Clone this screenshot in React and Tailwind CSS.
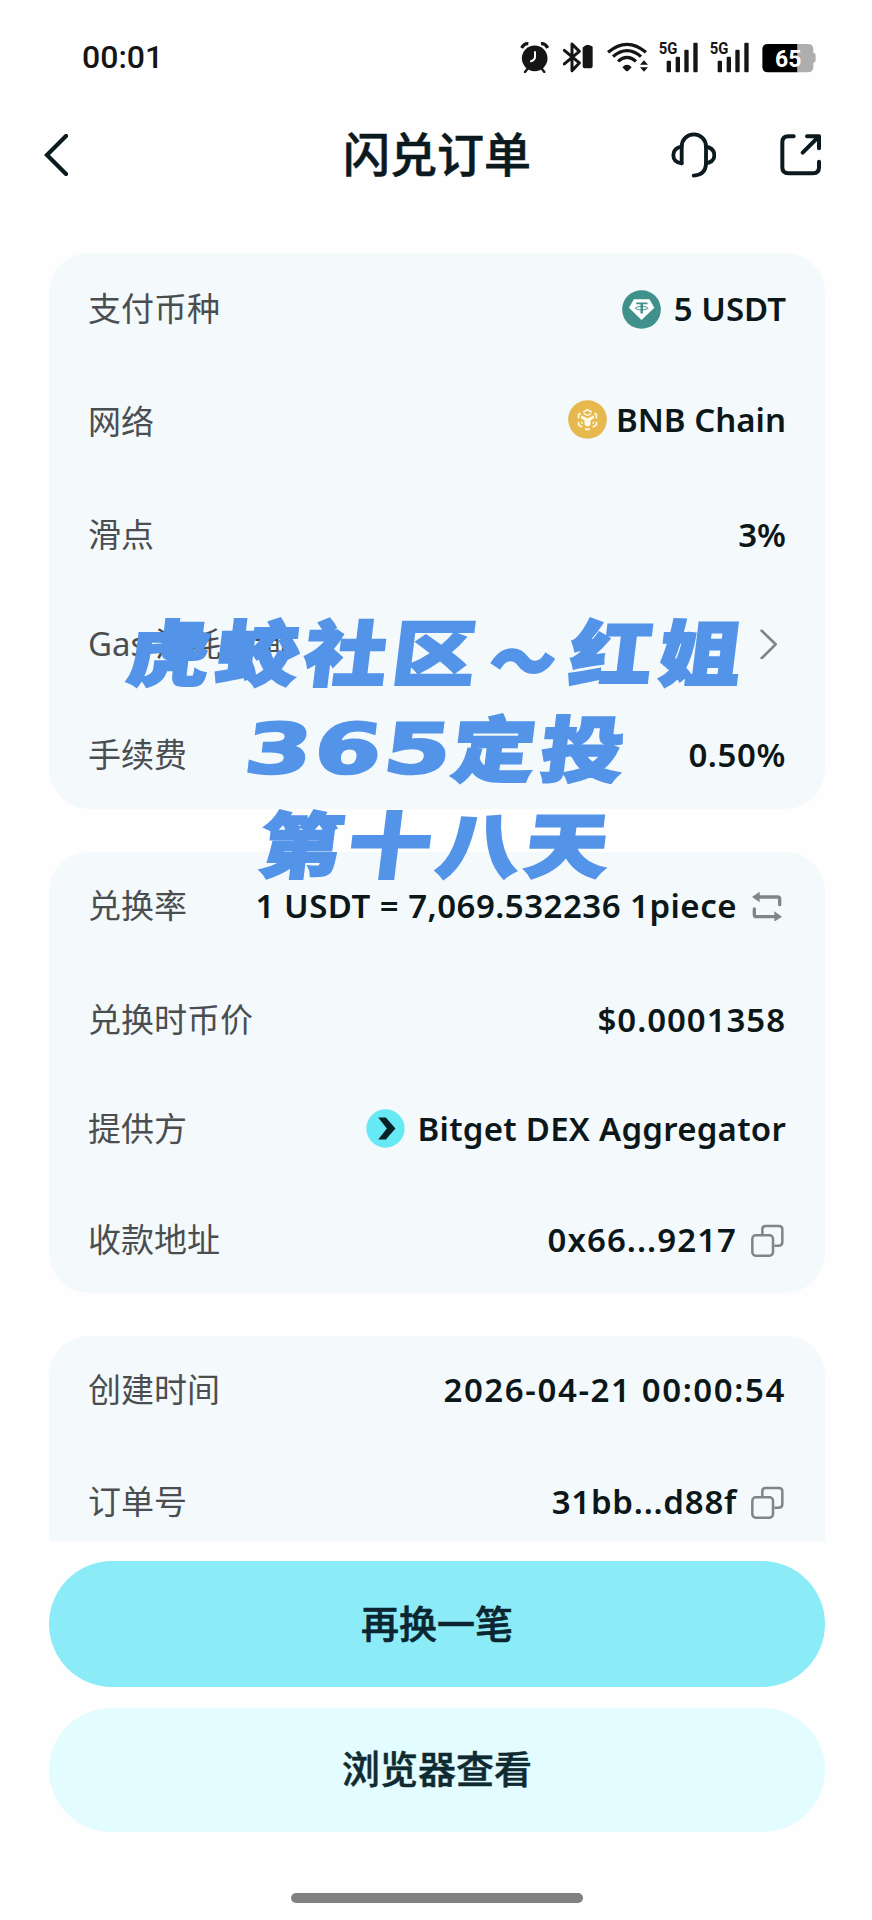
import React from "react";

const AlarmIcon = () => (
  <svg viewBox="55 60 92 100" className="mr-[14px] h-[33.3px] w-[30.7px]">
    <circle cx="102" cy="115" r="38.5" fill="#151515" />
    <path d="M63 84 Q70 70 83 71 M141 84 Q134 70 121 71" stroke="#151515" strokeWidth="10" fill="none" />
    <path d="M80 147 L73 156 M124 147 L131 156" stroke="#151515" strokeWidth="7" strokeLinecap="round" />
    <path d="M103 96 V112 Q102 120 91 124" stroke="#fff" strokeWidth="6" fill="none" strokeLinecap="round" />
  </svg>
);

const BluetoothIcon = () => (
  <svg viewBox="190 60 90 100" className="mr-[13.4px] h-[33.3px] w-[30px]">
    <path d="M194 91 L239 129 L217 152 V72 L239 94 L194 132" stroke="#151515" strokeWidth="9" fill="none" strokeLinejoin="round" strokeLinecap="round" />
    <path d="M253 80 q0 -3 4 -3 q1 -2 4 -2 h7 q3 0 4 2 q6 0 7 4 v58 q0 6 -6 6 h-18 q-6 0 -6 -6 v-55 q0 -4 4 -4z" fill="#151515" />
  </svg>
);

const WifiIcon = () => (
  <svg viewBox="320 60 125 100" className="mr-[11px] h-[33.3px] w-[41.7px]">
    <g stroke="#151515" strokeWidth="9.5" fill="none">
      <path d="M323 97 Q380 49 437 97" />
      <path d="M338 110 Q380 74 422 110" />
      <path d="M353 124 Q380 100 407 124" />
    </g>
    <path d="M366 142 Q380 127 394 142 L383 153 Q380 155 377 153z" fill="#151515" />
    <path d="M431 121 L443 134 H419z M431 155 L443 142 H419z" fill="#151515" />
  </svg>
);

const SignalIcon = ({ className }) => (
  <svg viewBox="478 60 117 100" className={`h-[33.3px] w-[39px] ${className}`}>
    <text x="477" y="103" fontSize="50" fontWeight="700" fontFamily="Roboto, sans-serif" textLength="56" lengthAdjust="spacingAndGlyphs" fill="#151515">5G</text>
    <g fill="#151515">
      <rect x="501" y="122" width="13" height="35" rx="3" />
      <rect x="528" y="110" width="13" height="47" rx="3" />
      <rect x="554" y="89" width="13" height="68" rx="3" />
      <rect x="581" y="68" width="13" height="89" rx="3" />
    </g>
  </svg>
);

const BatteryIcon = () => (
  <svg viewBox="787 60 161 100" className="h-[33.3px] w-[53.7px]">
    <path d="M893 72 H924 Q941 72 941 88 V98 Q948 99 948 106 V121 Q948 128 941 129 V141 Q941 157 924 157 H893z" fill="#aeaeae" />
    <path d="M893 72 H805 Q788 72 788 88 V141 Q788 157 805 157 H893z" fill="#000" />
    <text x="826" y="140" fontSize="70" fontWeight="700" fontFamily="Roboto, sans-serif" textLength="79" lengthAdjust="spacingAndGlyphs" fill="#fff">65</text>
  </svg>
);

const BackIcon = () => (
  <svg viewBox="0 0 24 42" className="-ml-[8px] h-[42px] w-[24px]">
    <path d="M22 2 L3 21 L22 40" stroke="#0b1a1e" strokeWidth="4.2" fill="none" strokeLinecap="round" />
  </svg>
);

const HeadsetIcon = () => (
  <svg viewBox="513 340 137 138" className="h-[46px] w-[45.7px]">
    <g stroke="#0b1a1e" strokeWidth="11.5" fill="none" strokeLinecap="round" strokeLinejoin="round">
      <path d="M545 434 V384 A36.500 37 0 0 1 618 384 V436 Q616 469 581 471" />
      <path d="M545 384 Q520 388 520 410 Q520 431 545 434" />
      <path d="M618 384 Q643 389 643 410 Q643 430 618 434" />
    </g>
  </svg>
);

const ShareIcon = () => (
  <svg viewBox="840 347 125 125" className="h-[41.7px] w-[41.7px]">
    <g stroke="#0b1a1e" strokeWidth="12" fill="none" strokeLinecap="round" strokeLinejoin="round">
      <path d="M881 354 H865 Q847 354 847 372 V447 Q847 465 865 465 H939 Q957 465 957 447 V430" />
      <path d="M921 354 H957 V390 M955 356 L908 403" />
    </g>
  </svg>
);

const UsdtIcon = () => (
  <svg viewBox="0 0 118 118" className="mr-[13px] h-[39px] w-[39px]">
    <circle cx="59" cy="59" r="58.500" fill="#40908b" />
    <path d="M36 28 H83 L98 54 L59 91 L21 54z" fill="#fff" />
    <path d="M43 38 H77 V43 H63.500 V71 H56 V43 H43z" fill="#40908b" />
    <ellipse cx="59.500" cy="55" rx="19" ry="5" fill="none" stroke="#40908b" strokeWidth="3" />
  </svg>
);

const BnbIcon = () => (
  <svg viewBox="0 0 118 118" className="mr-[9px] h-[39px] w-[39px]">
    <circle cx="59" cy="59" r="58.500" fill="#e6b84d" />
    <g stroke="#fffbe8" strokeWidth="5" fill="none" strokeLinejoin="round">
      <path d="M46 37 L59 29 L72 37 M80 40 L86 44 V56 M86 66 V75 L75 82 M67 86 L59 90 L51 86 M43 82 L32 75 V66 M32 56 V44 L38 40" />
      <path d="M48 41 L59 47 L70 41" strokeWidth="4" />
    </g>
    <path d="M40 46 L59 56 L78 46 L79 55 L68 62 V76 L59 81 L50 76 V62 L39 55z" fill="#fffbe8" />
    <path d="M39 64 L44 67 V73 L39 70z M79 64 L74 67 V73 L79 70z" fill="#fffbe8" />
  </svg>
);

const BitgetIcon = () => (
  <svg viewBox="0 0 118 118" className="mr-[13px] h-[39px] w-[39px]">
    <circle cx="59" cy="59" r="58" fill="#66e8f5" />
    <path d="M37 26 H60 L89 59 L60 92 H37 L63 59z" fill="#0a2027" />
  </svg>
);

const SwapIcon = () => (
  <svg viewBox="935 930 90 92" className="mr-[4px] ml-[15px] h-[30.7px] w-[30px]">
    <g stroke="#808585" strokeWidth="10" fill="none" strokeLinejoin="round" strokeLinecap="round">
      <path d="M950 948 H1012 Q1018 948 1018 954 V971" />
      <path d="M942 984 V1001 Q942 1007 948 1007 H1010" />
    </g>
    <path d="M935 948 L958 932 V964z M1025 1007 L1002 991 V1022z" fill="#808585" />
  </svg>
);

const CopyIcon = () => (
  <svg viewBox="1231 792 99 99" className="mr-[2px] ml-[14px] h-[33px] w-[33px]">
    <g stroke="#808585" strokeWidth="7.5" fill="none">
      <path d="M1265 822 V808 Q1265 798 1275 798 H1315 Q1325 798 1325 808 V847 Q1325 857 1315 857 H1301" />
      <rect x="1235" y="826" width="62" height="61" rx="10" />
    </g>
  </svg>
);

const ChevronIcon = () => (
  <svg viewBox="958 145 52 92" className="mr-[9px] h-[30.7px] w-[17.3px]">
    <path d="M963 150 L1005 191 L963 233" stroke="#7f8484" strokeWidth="8" fill="none" strokeLinecap="round" />
  </svg>
);

const Row = ({ label, className, children, valueClass = "" }) => (
  <div className={`flex shrink-0 items-center justify-between pr-[39px] pl-[39px] ${className}`}>
    <span className="text-[33px] leading-[44px] text-[#4a4e50]">{label}</span>
    <span className={`flex items-center text-[33px] leading-[44px] font-semibold whitespace-pre text-[#0c1719] ${valueClass}`}>
      {children}
    </span>
  </div>
);

const card = "flex shrink-0 flex-col overflow-hidden bg-[#f4f9fb]";
const stampLine = "flex h-[96px] items-center pl-[4px] scale-x-116 -skew-x-[6deg]";

export default function App() {
  return (
    <div className="relative flex h-[1920px] w-[872px] flex-col overflow-hidden bg-[#fefefe] font-['Noto_Sans','Noto_Sans_CJK_SC',sans-serif]">
      <div className="flex h-[105px] shrink-0 items-center justify-between pt-[8px] pr-[56px] pl-[82px]">
        <span className="font-['Roboto',sans-serif] text-[32px] font-medium text-[#151515]">00:01</span>
        <div className="flex items-center">
          <AlarmIcon />
          <BluetoothIcon />
          <WifiIcon />
          <SignalIcon className="mr-[12px]" />
          <SignalIcon className="mr-[13px]" />
          <BatteryIcon />
        </div>
      </div>

      <header className="grid h-[100px] shrink-0 grid-cols-[1fr_auto_1fr] items-center pr-[50px] pl-[52px]">
        <BackIcon />
        <h1 className="pb-[2px] text-[47px] leading-[60px] font-medium text-[#0b1a1e] [-webkit-text-stroke:0.6px_#0b1a1e]">闪兑订单</h1>
        <div className="flex items-center justify-end gap-[64px]">
          <HeadsetIcon />
          <ShareIcon />
        </div>
      </header>

      <main className="flex h-[1336px] shrink-0 flex-col gap-[43px] overflow-hidden pt-[48px] pr-[47px] pl-[49px]">
        <section className={`${card} h-[556px] rounded-[40px]`}>
          <Row label="支付币种" className="h-[112px]">
            <UsdtIcon />5 USDT
          </Row>
          <Row label="网络" className="h-[114px]" valueClass="pb-[5px]">
            <BnbIcon />BNB Chain
          </Row>
          <Row label="滑点" className="h-[112px]">3%</Row>
          <Row label="Gas 消耗查询" className="h-[106px]">
            <ChevronIcon />
          </Row>
          <Row label="手续费" className="h-[112px] pt-[4px]" valueClass="tracking-[0.6px]">0.50%</Row>
        </section>

        <section className={`${card} h-[441px] rounded-[40px]`}>
          <Row label="兑换率" className="h-[108px]" valueClass="tracking-[0.48px]">
            1 USDT = 7,069.532236 1piece
            <SwapIcon />
          </Row>
          <Row label="兑换时币价" className="h-[119px]" valueClass="tracking-[0.95px]">$0.0001358</Row>
          <Row label="提供方" className="h-[101px] pb-[2px]" valueClass="tracking-[0.25px]">
            <BitgetIcon />Bitget DEX Aggregator
          </Row>
          <Row label="收款地址" className="h-[112px] pt-[8px]" valueClass="tracking-[1.05px]">
            0x66...9217
            <CopyIcon />
          </Row>
        </section>

        <section className={`${card} h-[206px] rounded-t-[40px]`}>
          <Row label="创建时间" className="h-[108px]" valueClass="tracking-[1.6px]">2026-04-21 00:00:54</Row>
          <Row label="订单号" className="h-[96px] pt-[20px]" valueClass="tracking-[0.75px]">
            31bb...d88f
            <CopyIcon />
          </Row>
        </section>
      </main>

      <footer className="flex shrink-0 flex-col items-center pt-[20px] pr-[47px] pl-[49px]">
        <button className="h-[126px] w-full rounded-full bg-[#8becf7] pb-[2px] text-[38px] font-medium text-[#0b2630] [-webkit-text-stroke:0.6px_#0b2630]">再换一笔</button>
        <button className="mt-[21px] h-[124px] w-full rounded-full bg-[#e3fcff] pb-[4px] text-[38px] font-medium text-[#0f2b31] [-webkit-text-stroke:0.5px_#0f2b31]">浏览器查看</button>
        <div className="mt-[61px] h-[10px] w-[292px] rounded-full bg-[#808080]" />
      </footer>

      <div className="pointer-events-none absolute top-[601px] left-0 flex w-[872px] flex-col items-center font-['Noto_Sans_CJK_SC',sans-serif] text-[71px] leading-[96px] font-black tracking-[5.3px] whitespace-nowrap text-[#5394e9] [-webkit-text-stroke:2.5px_#5394e9]">
        <div className={stampLine}>
          <span>虎蛟社区</span>
          <span className="inline-block translate-y-[8px] scale-x-80">～</span>
          <span>红姐</span>
        </div>
        <div className={stampLine}>
          <span className="w-[179px]">
            <span className="inline-block origin-left scale-x-120 font-['DejaVu_Sans',sans-serif] text-[69px] font-bold tracking-[2px]">365</span>
          </span>
          <span>定投</span>
        </div>
        <div className={stampLine}>第十八天</div>
      </div>
    </div>
  );
}
